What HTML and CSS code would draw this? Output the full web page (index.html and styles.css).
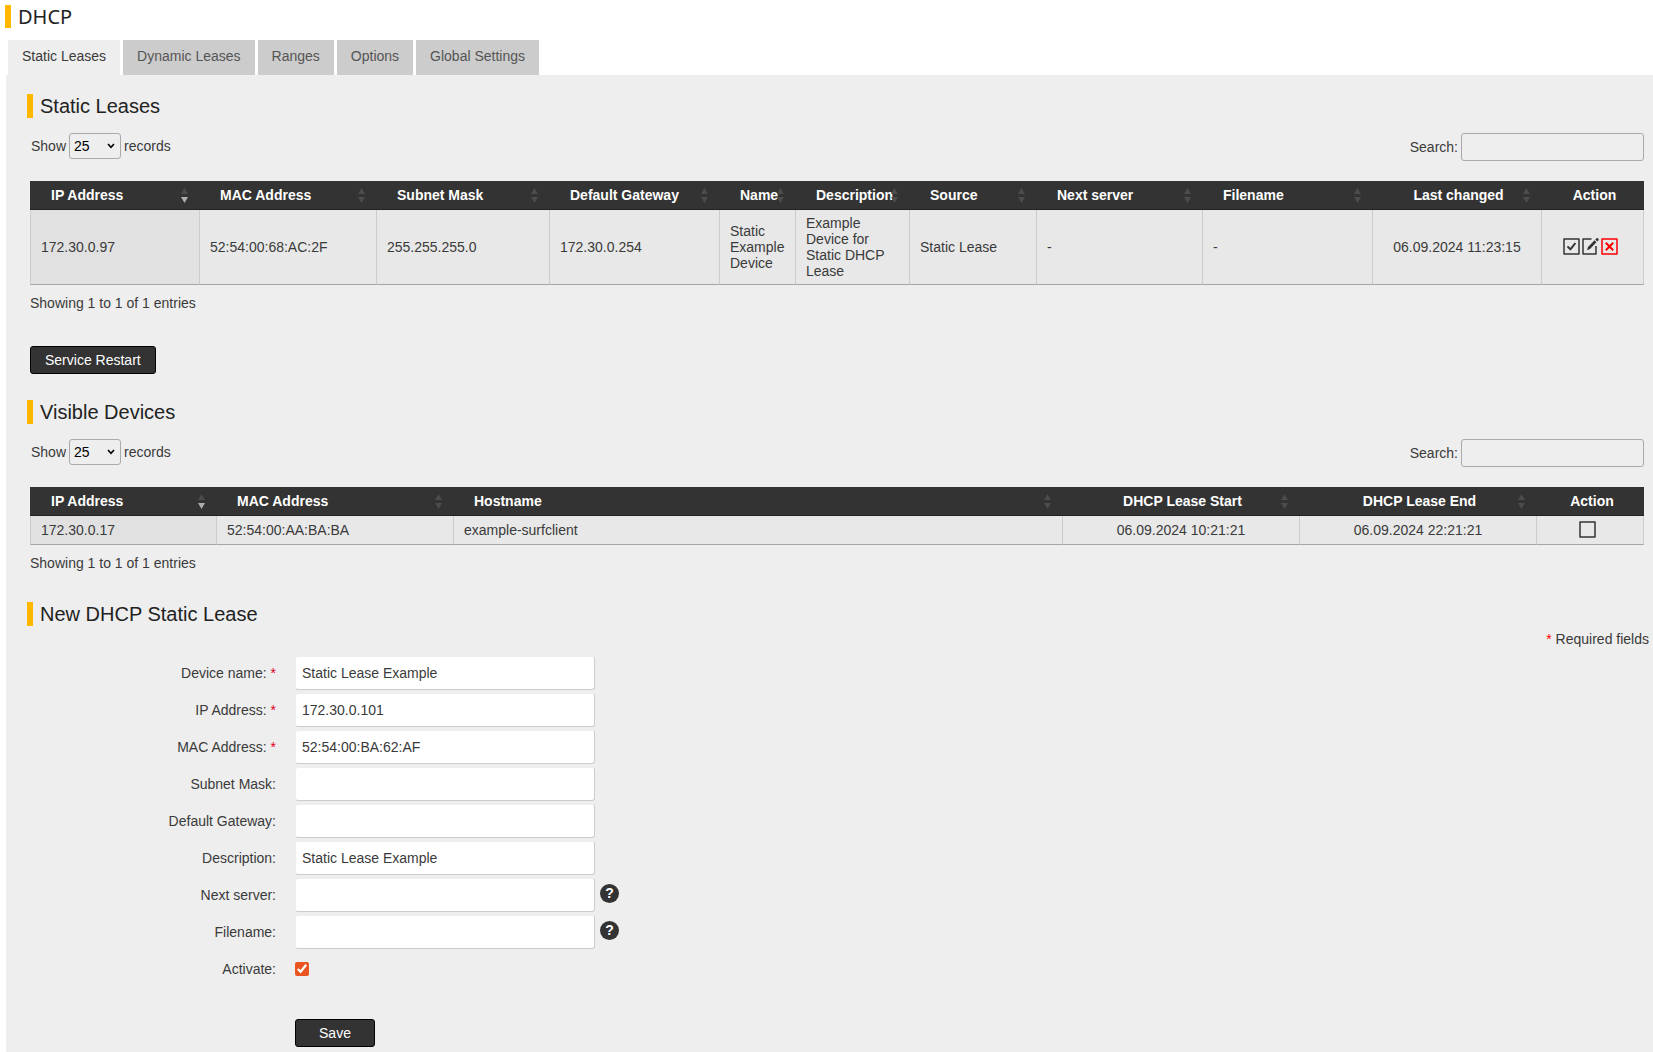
FILE: index.html
```html
<!DOCTYPE html>
<html lang="en">
<head>
<meta charset="utf-8">
<meta name="viewport" content="width=device-width, initial-scale=1">
<title>DHCP</title>
<link rel="stylesheet" href="styles.css">
</head>
<body>
<h1 class="page-title">DHCP</h1>
<nav class="tabs">
  <a class="tab tab-active" href="#static">Static Leases</a>
  <a class="tab" href="#dynamic">Dynamic Leases</a>
  <a class="tab" href="#ranges">Ranges</a>
  <a class="tab" href="#options">Options</a>
  <a class="tab" href="#global">Global Settings</a>
</nav>
<main class="panel">
  <section class="section">
    <h2 class="section-title">Static Leases</h2>
    <div class="data">
      <div class="toolbar">
        <label class="length">Show <select><option>10</option><option selected>25</option><option>50</option></select> records</label>
        <label class="search">Search: <input type="search"></label>
      </div>
      <table class="grid">
        <thead>
          <tr>
            <th class="sortable sorted w169">IP Address</th>
            <th class="sortable w177">MAC Address</th>
            <th class="sortable w173">Subnet Mask</th>
            <th class="sortable w170">Default Gateway</th>
            <th class="sortable w76">Name</th>
            <th class="sortable w114">Description</th>
            <th class="sortable w127">Source</th>
            <th class="sortable w166">Next server</th>
            <th class="sortable w170">Filename</th>
            <th class="sortable center w169">Last changed</th>
            <th class="center w103">Action</th>
          </tr>
        </thead>
        <tbody>
          <tr>
            <td class="sorted">172.30.0.97</td>
            <td>52:54:00:68:AC:2F</td>
            <td>255.255.255.0</td>
            <td>172.30.0.254</td>
            <td>Static Example Device</td>
            <td>Example Device for Static DHCP Lease</td>
            <td>Static Lease</td>
            <td>-</td>
            <td>-</td>
            <td class="center">06.09.2024 11:23:15</td>
            <td>
              <div class="actions">
                <button class="icon" type="button" aria-label="Deactivate"><svg viewBox="0 0 17 17"><rect x="1" y="1" width="15" height="15"/><path class="bold" d="M4.5 8.4 7.4 11.4 12.4 5"/></svg></button>
                <button class="icon" type="button" aria-label="Edit"><svg viewBox="0 0 17 17"><path d="M9.5 1H1V16H14V8"/><path class="solid" d="M5 12.2 6 9 12.6 2.2 14.4 4.2 8 11ZM13.3 1.5 14.6.3a1 1 0 0 1 1.3 0l.6.7a1 1 0 0 1 0 1.2L15.2 3.5Z"/></svg></button>
                <button class="icon icon-delete" type="button" aria-label="Delete"><svg viewBox="0 0 17 17"><rect x="1" y="1" width="15" height="15"/><path class="bold" d="M4.8 4.8 12.2 12.2M12.2 4.8 4.8 12.2"/></svg></button>
              </div>
            </td>
          </tr>
        </tbody>
      </table>
      <p class="info">Showing 1 to 1 of 1 entries</p>
      <button class="button restart" type="button">Service Restart</button>
    </div>
  </section>

  <section class="section">
    <h2 class="section-title">Visible Devices</h2>
    <div class="data">
      <div class="toolbar">
        <label class="length">Show <select><option>10</option><option selected>25</option><option>50</option></select> records</label>
        <label class="search">Search: <input type="search"></label>
      </div>
      <table class="grid">
        <thead>
          <tr>
            <th class="sortable sorted w186">IP Address</th>
            <th class="sortable w237">MAC Address</th>
            <th class="sortable w609">Hostname</th>
            <th class="sortable center w237">DHCP Lease Start</th>
            <th class="sortable center w237">DHCP Lease End</th>
            <th class="center w108">Action</th>
          </tr>
        </thead>
        <tbody>
          <tr>
            <td class="sorted">172.30.0.17</td>
            <td>52:54:00:AA:BA:BA</td>
            <td>example-surfclient</td>
            <td class="center">06.09.2024 10:21:21</td>
            <td class="center">06.09.2024 22:21:21</td>
            <td>
              <div class="actions">
                <button class="icon" type="button" aria-label="Add lease"><svg viewBox="0 0 17 17"><rect x="1" y="1" width="15" height="15"/></svg></button>
              </div>
            </td>
          </tr>
        </tbody>
      </table>
      <p class="info">Showing 1 to 1 of 1 entries</p>
    </div>
  </section>

  <section class="section section-form">
    <h2 class="section-title">New DHCP Static Lease</h2>
    <p class="required-note"><span class="star">*</span> Required fields</p>
    <form class="form">
      <label class="label" for="name">Device name: <span class="star">*</span></label>
      <div class="field"><input class="text" id="name" type="text" value="Static Lease Example"></div>
      <label class="label" for="ip">IP Address: <span class="star">*</span></label>
      <div class="field"><input class="text" id="ip" type="text" value="172.30.0.101"></div>
      <label class="label" for="mac">MAC Address: <span class="star">*</span></label>
      <div class="field"><input class="text" id="mac" type="text" value="52:54:00:BA:62:AF"></div>
      <label class="label" for="mask">Subnet Mask:</label>
      <div class="field"><input class="text" id="mask" type="text"></div>
      <label class="label" for="gateway">Default Gateway:</label>
      <div class="field"><input class="text" id="gateway" type="text"></div>
      <label class="label" for="description">Description:</label>
      <div class="field"><input class="text" id="description" type="text" value="Static Lease Example"></div>
      <label class="label" for="next">Next server:</label>
      <div class="field"><input class="text" id="next" type="text"><button class="help" type="button">?</button></div>
      <label class="label" for="file">Filename:</label>
      <div class="field"><input class="text" id="file" type="text"><button class="help" type="button">?</button></div>
      <label class="label" for="active">Activate:</label>
      <div class="field"><input class="check" id="active" type="checkbox" checked></div>
      <button class="button save" type="button">Save</button>
    </form>
  </section>
</main>
</body>
</html>
```
FILE: styles.css
```css
* {
  box-sizing: border-box;
}

body {
  display: flex;
  flex-direction: column;
  min-height: 100vh;
  margin: 0;
  background: #fff;
  color: #3a3a3a;
  font: 14px/16px "Liberation Sans", Arial, sans-serif;
}

h1, h2, p {
  margin: 0;
}

button, input, select {
  font: inherit;
}

.page-title {
  margin: 5px 5px 12px;
  padding-left: 7px;
  border-left: 6px solid #ffb700;
  color: #222;
  font: 20px/23px "Noto Sans", "Open Sans", sans-serif;
}

/* Tabs */
.tabs {
  display: flex;
  gap: 3px;
  padding-left: 8px;
}

.tab {
  height: 35px;
  padding: 8px 14px;
  background: #ccc;
  color: #555;
  text-decoration: none;
}

.tab-active {
  background: #eee;
  color: #3a3a3a;
}

.panel {
  flex: 1;
  margin-left: 6px;
  padding: 19px 4px 5px 21px;
  background: #eee;
}

.section + .section {
  margin-top: 26px;
}

.section + .section-form {
  margin-top: 31px;
}

.section-title {
  padding-left: 7px;
  border-left: 6px solid #ffb700;
  color: #222;
  font-size: 20px;
  font-weight: 400;
  line-height: 24px;
}

.data {
  padding: 0 5px 0 3px;
}

/* Controls above each table */
.toolbar {
  display: flex;
  justify-content: space-between;
  align-items: flex-start;
  margin: 15px 0 20px;
}

.length,
.search {
  display: flex;
  align-items: center;
  gap: 3px;
}

.length {
  padding-left: 1px;
}

.length select {
  width: 52px;
  height: 26px;
  padding: 0 0 0 4px;
  border: 1px solid #aaa;
  border-radius: 3px;
  background: url("data:image/svg+xml,%3Csvg xmlns='http://www.w3.org/2000/svg' width='8' height='6'%3E%3Cpath d='M1 1L4 4.4L7 1' fill='none' stroke='%23000' stroke-width='1.6'/%3E%3C/svg%3E") no-repeat right 5px center;
  color: #000;
  appearance: none;
}

.search input {
  width: 183px;
  height: 28px;
  border: 1px solid #aaa;
  border-radius: 3px;
  background: transparent;
  appearance: none;
}

/* Tables */
.grid {
  width: 100%;
  border-collapse: separate;
  border-spacing: 0;
  table-layout: fixed;
}

.grid th {
  position: relative;
  height: 29px;
  padding: 0 16px 0 21px;
  border-bottom: 1px solid #222;
  background: #333;
  color: #fff;
  text-align: left;
  white-space: nowrap;
}

.grid td {
  height: 29px;
  padding: 5px 10px 5px 10px;
  border-bottom: 1px solid #a5a5a5;
  border-left: 1px solid #ccc;
  background: #e8e8e8;
}

.grid td:last-child {
  padding: 0 10px;
  border-right: 1px solid #ccc;
}

.grid td.sorted {
  background: #e1e1e1;
}

.grid th.center {
  padding: 0 16px 0 20px;
}

.grid .center {
  text-align: center;
}

/* Sort arrows */
.sortable::before,
.sortable::after {
  content: "";
  position: absolute;
  right: 11px;
  width: 7px;
  height: 6px;
  background: #4c4c4c;
}

.sortable::before {
  top: 7px;
  clip-path: polygon(50% 0, 100% 100%, 0 100%);
}

.sortable::after {
  top: 16px;
  clip-path: polygon(0 0, 100% 0, 50% 100%);
}

.sortable.sorted::after {
  background: #adadad;
}

.w76 { width: 76px; }
.w103 { width: 103px; }
.w108 { width: 108px; }
.w114 { width: 114px; }
.w127 { width: 127px; }
.w166 { width: 166px; }
.w169 { width: 169px; }
.w170 { width: 170px; }
.w173 { width: 173px; }
.w177 { width: 177px; }
.w186 { width: 186px; }
.w237 { width: 237px; }
.w609 { width: 609px; }

.actions {
  display: flex;
  justify-content: center;
  gap: 2px;
  padding: 0 5px 2px 0;
}

.icon {
  width: 17px;
  height: 17px;
  padding: 0;
  border: 0;
  background: none;
  color: #333;
}

.icon-delete {
  color: #f00;
}

.icon svg {
  display: block;
  fill: none;
  stroke: currentColor;
  stroke-width: 1.5;
  stroke-linejoin: round;
}

.icon .bold {
  stroke-width: 2;
}

.icon .solid {
  fill: currentColor;
  stroke: none;
}

.info {
  padding-top: 10px;
}

.button {
  height: 28px;
  padding: 0 14px;
  border: 1px solid #000;
  border-radius: 3px;
  background: #333;
  color: #fff;
}

.restart {
  display: block;
  margin-top: 35px;
}

/* Form */
.required-note {
  padding: 5px 0 9px;
  text-align: right;
}

.star {
  color: #f00;
}

.form {
  display: grid;
  grid-template-columns: 249px 1fr;
  gap: 3px 19px;
}

.label {
  align-self: center;
  text-align: right;
}

.label .star {
  color: #e2001a;
}

.field {
  display: flex;
  align-items: center;
  gap: 5px;
  height: 34px;
}

.text {
  width: 300px;
  height: 34px;
  padding: 0 6px;
  border: 1px solid;
  border-color: #eee #ccc #ccc #eee;
  border-radius: 3px;
  background: #fff;
  color: #3a3a3a;
}

.help {
  width: 19px;
  height: 19px;
  margin-bottom: 4px;
  padding: 0;
  border: 0;
  border-radius: 50%;
  background: #333;
  color: #fff;
  font-weight: 700;
}

.check {
  width: 14px;
  height: 14px;
  margin: 0;
  accent-color: #e95420;
}

.save {
  grid-column: 2;
  justify-self: start;
  width: 80px;
  margin-top: 30px;
}
```
